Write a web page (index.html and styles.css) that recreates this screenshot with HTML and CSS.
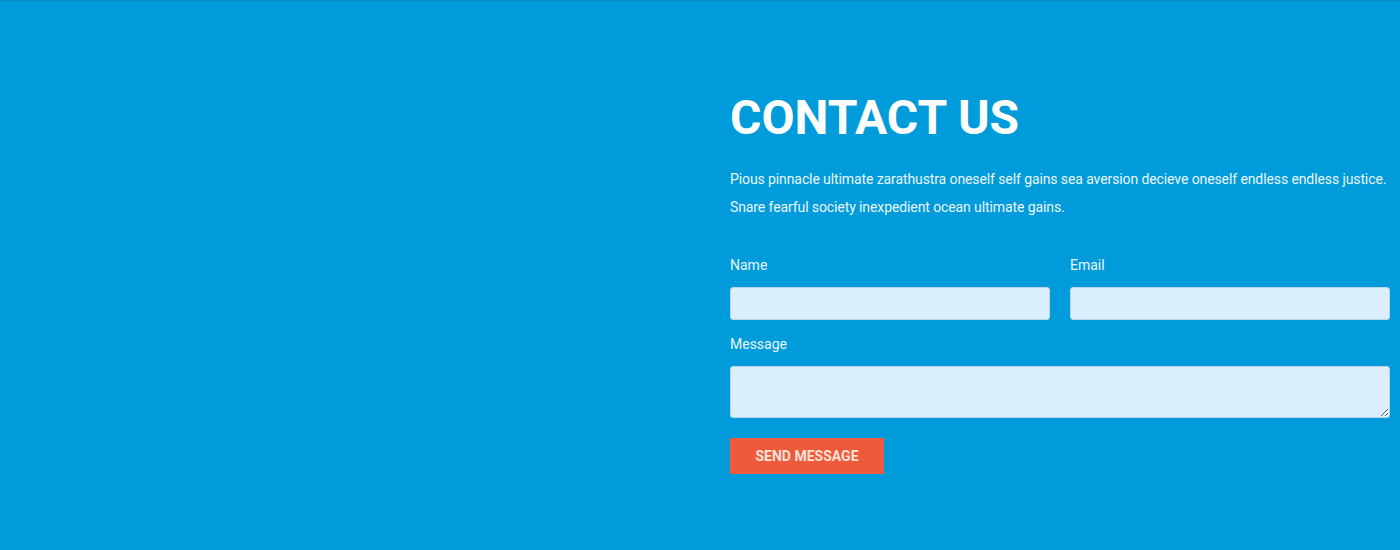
FILE: index.html
```html
<!DOCTYPE html>
<html>
<head>
<meta charset="utf-8">
<link rel="stylesheet" href="styles.css">
</head>
<body>
<section class="contact">
  <div class="spacer"></div>
  <div class="content">
    <h1 class="title">CONTACT US</h1>
    <p class="lead">Pious pinnacle ultimate zarathustra oneself self gains sea aversion decieve oneself endless endless justice. Snare fearful society inexpedient ocean ultimate gains.</p>
    <form class="form">
      <div class="row">
        <div class="field">
          <label class="label">Name</label>
          <input class="input" type="text">
        </div>
        <div class="field">
          <label class="label">Email</label>
          <input class="input" type="text">
        </div>
      </div>
      <div class="field field-message">
        <label class="label">Message</label>
        <textarea class="textarea"></textarea>
      </div>
      <button type="button" class="btn">SEND MESSAGE</button>
    </form>
  </div>
</section>
</body>
</html>
```
FILE: styles.css
```css
* { box-sizing: border-box; }
html, body { margin: 0; padding: 0; }
body { font-family: Roboto, "Liberation Sans", sans-serif; }
.contact {
  display: flex;
  height: 550px;
  background: #009bda;
  border-top: 1px solid #0a8bc0;
  padding-top: 87px;
}
.spacer { width: 730px; flex: none; }
.content { width: 660px; flex: none; }
.title {
  margin: 0;
  font-size: 48px;
  line-height: 60px;
  font-weight: 700;
  color: #ffffff;
}
.lead {
  margin: 17px 0 0;
  font-size: 14px;
  line-height: 28px;
  letter-spacing: -0.1px;
  color: #eaf6fc;
}
.form { margin-top: 34px; }
.row { display: flex; gap: 20px; margin-bottom: 14px; }
.row .field { flex: 1; }
.field-message { margin-bottom: 20px; }
.label {
  display: block;
  font-size: 14px;
  line-height: 20px;
  color: #e8f5fc;
  margin-bottom: 12px;
}
.input, .textarea {
  display: block;
  width: 100%;
  background: #daeefb;
  border: 1px solid #b9d6e6;
  border-radius: 3px;
  font-family: inherit;
  margin: 0;
}
.input { height: 33px; }
.textarea { height: 52px; resize: vertical; }
.btn {
  display: block;
  width: 154px;
  height: 36px;
  border: none;
  background: #f05a3c;
  color: #fde2d8;
  font-family: inherit;
  font-weight: 700;
  font-size: 14px;
  padding: 0;
  cursor: pointer;
}
```
